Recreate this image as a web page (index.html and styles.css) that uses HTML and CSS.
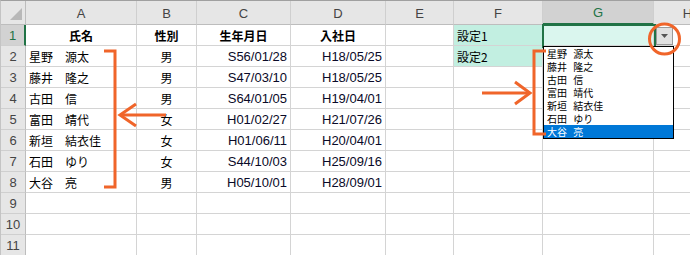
FILE: index.html
```html
<!DOCTYPE html>
<html lang="ja">
<head>
  <meta charset="UTF-8">
  <title>入力規則のリスト</title>
  <link rel="stylesheet" href="styles.css">
</head>
<body>
  <div class="sheet">
    <div class="grid">
      <div class="corner">
        <svg width="12" height="12" viewBox="0 0 12 12"><polygon points="12,0 12,12 0,12" fill="#b8b8b8"/></svg>
      </div>
      <div class="colhead">A</div>
      <div class="colhead">B</div>
      <div class="colhead">C</div>
      <div class="colhead">D</div>
      <div class="colhead">E</div>
      <div class="colhead">F</div>
      <div class="colhead sel">G</div>
      <div class="colhead">H</div>

      <div class="rowhead sel">1</div>
      <div class="cell title">氏名</div>
      <div class="cell title">性別</div>
      <div class="cell title">生年月日</div>
      <div class="cell title">入社日</div>
      <div class="cell"></div>
      <div class="cell jp setting">設定1</div>
      <div class="cell active"></div>
      <div class="cell"></div>

      <div class="rowhead">2</div>
      <div class="cell jp">星野　源太</div>
      <div class="cell jp center">男</div>
      <div class="cell num">S56/01/28</div>
      <div class="cell num">H18/05/25</div>
      <div class="cell"></div>
      <div class="cell jp setting">設定2</div>
      <div class="cell"></div>
      <div class="cell"></div>

      <div class="rowhead">3</div>
      <div class="cell jp">藤井　隆之</div>
      <div class="cell jp center">男</div>
      <div class="cell num">S47/03/10</div>
      <div class="cell num">H18/05/25</div>
      <div class="cell"></div><div class="cell"></div><div class="cell"></div><div class="cell"></div>

      <div class="rowhead">4</div>
      <div class="cell jp">古田　信</div>
      <div class="cell jp center">男</div>
      <div class="cell num">S64/01/05</div>
      <div class="cell num">H19/04/01</div>
      <div class="cell"></div><div class="cell"></div><div class="cell"></div><div class="cell"></div>

      <div class="rowhead">5</div>
      <div class="cell jp">富田　靖代</div>
      <div class="cell jp center">女</div>
      <div class="cell num">H01/02/27</div>
      <div class="cell num">H21/07/26</div>
      <div class="cell"></div><div class="cell"></div><div class="cell"></div><div class="cell"></div>

      <div class="rowhead">6</div>
      <div class="cell jp">新垣　結衣佳</div>
      <div class="cell jp center">女</div>
      <div class="cell num">H01/06/11</div>
      <div class="cell num">H20/04/01</div>
      <div class="cell"></div><div class="cell"></div><div class="cell"></div><div class="cell"></div>

      <div class="rowhead">7</div>
      <div class="cell jp">石田　ゆり</div>
      <div class="cell jp center">女</div>
      <div class="cell num">S44/10/03</div>
      <div class="cell num">H25/09/16</div>
      <div class="cell"></div><div class="cell"></div><div class="cell"></div><div class="cell"></div>

      <div class="rowhead">8</div>
      <div class="cell jp">大谷　亮</div>
      <div class="cell jp center">男</div>
      <div class="cell num">H05/10/01</div>
      <div class="cell num">H28/09/01</div>
      <div class="cell"></div><div class="cell"></div><div class="cell"></div><div class="cell"></div>

      <div class="rowhead">9</div>
      <div class="cell"></div><div class="cell"></div><div class="cell"></div><div class="cell"></div>
      <div class="cell"></div><div class="cell"></div><div class="cell"></div><div class="cell"></div>

      <div class="rowhead">10</div>
      <div class="cell"></div><div class="cell"></div><div class="cell"></div><div class="cell"></div>
      <div class="cell"></div><div class="cell"></div><div class="cell"></div><div class="cell"></div>

      <div class="rowhead">11</div>
      <div class="cell"></div><div class="cell"></div><div class="cell"></div><div class="cell"></div>
      <div class="cell"></div><div class="cell"></div><div class="cell"></div><div class="cell"></div>
    </div>

    <!-- 選択中のセル G1 とドロップダウン -->
    <div class="selection"></div>
    <div class="dd-button">
      <svg width="7" height="4" viewBox="0 0 7 4"><polygon points="0,0 7,0 3.5,4" fill="#555"/></svg>
    </div>
    <ul class="dd-list">
      <li>星野 源太</li>
      <li>藤井 隆之</li>
      <li>古田 信</li>
      <li>富田 靖代</li>
      <li>新垣 結衣佳</li>
      <li>石田 ゆり</li>
      <li class="picked">大谷 亮</li>
    </ul>

    <!-- 説明用のマーク -->
    <svg class="marks" width="690" height="255" viewBox="0 0 690 255">
      <g fill="none" stroke="#f0652a" stroke-width="3">
        <path d="M104 51 H115 V187 H104"/>
        <path d="M120 115 H166"/>
        <path d="M136 104 L120 115 L136 126"/>
        <path d="M546 51 H534 V134 H546"/>
        <path d="M482 93 H528"/>
        <path d="M515 82 L530 93 L515 104"/>
        <circle cx="664.5" cy="39" r="15"/>
      </g>
    </svg>
  </div>
</body>
</html>
```

FILE: styles.css
```css
body {
  margin: 0;
  background-color: #fff;
  overflow: hidden;
}

.sheet {
  position: relative;
  width: 690px;
  height: 255px;
  overflow: hidden;
  border-top: 1px solid #a0a0a0;
  border-left: 1px solid #c4c4c4;
  box-sizing: border-box;
  font-family: "Liberation Sans", "Noto Sans CJK JP", sans-serif;
  font-size: 13px;
  color: #000;
}

.grid {
  display: grid;
  grid-template-columns: 25px 111px 60px 94px 95px 68px 89px 111px 68px;
  grid-template-rows: 24px;
  grid-auto-rows: 21px;
}

.grid > div {
  box-sizing: border-box;
  overflow: hidden;
  white-space: nowrap;
}

.corner,
.colhead,
.rowhead {
  background-color: #e6e6e6;
  color: #444;
}

.corner {
  display: flex;
  justify-content: flex-end;
  align-items: flex-end;
  padding: 0 3px 4px 0;
  border-right: 1px solid #bdbdbd;
  border-bottom: 1px solid #bdbdbd;
}

.colhead {
  display: flex;
  justify-content: center;
  align-items: center;
  border-right: 1px solid #cfcfcf;
  border-bottom: 1px solid #bdbdbd;
  padding-top: 1px;
}

.colhead.sel {
  background-color: #d2d2d2;
  color: #217346;
  border-bottom: 2px solid #217346;
}

.rowhead {
  display: flex;
  justify-content: center;
  align-items: center;
  border-right: 1px solid #bdbdbd;
  border-bottom: 1px solid #cfcfcf;
}

.rowhead.sel {
  background-color: #d2d2d2;
  color: #217346;
  border-right: 2px solid #217346;
}

.cell {
  display: flex;
  align-items: center;
  padding: 0 3px;
  border-right: 1px solid #d4d4d4;
  border-bottom: 1px solid #d4d4d4;
}

.jp {
  font-family: "Noto Sans CJK JP", sans-serif;
  font-size: 12px;
}

.title {
  justify-content: center;
  font-family: "Noto Sans CJK JP", sans-serif;
  font-size: 12px;
  font-weight: bold;
}

.center {
  justify-content: center;
}

.num {
  justify-content: flex-end;
  color: #0a0a28;
}

.setting {
  background-color: #c2efe1;
}

.active {
  background-color: #daf6ee;
}

.selection {
  position: absolute;
  left: 541px;
  top: 23px;
  width: 114px;
  height: 24px;
  box-sizing: border-box;
  border: 2px solid #217346;
}

.dd-button {
  position: absolute;
  left: 655px;
  top: 26px;
  width: 17px;
  height: 18px;
  box-sizing: border-box;
  border: 1px solid #9a9a9a;
  background-color: #e1e1e1;
  display: flex;
  justify-content: center;
  align-items: center;
}

.dd-list {
  position: absolute;
  left: 542px;
  top: 45px;
  width: 129px;
  margin: 0;
  padding: 0;
  list-style: none;
  border: 1px solid #000;
  background-color: #fff;
  font-family: "Noto Sans CJK JP", sans-serif;
  font-size: 10px;
  line-height: 13px;
}

.dd-list li {
  height: 13px;
  padding-left: 3px;
  word-spacing: 4px;
}

.dd-list li.picked {
  background-color: #0078d7;
  color: #fff;
}

.marks {
  position: absolute;
  left: -1px;
  top: -1px;
}
```
